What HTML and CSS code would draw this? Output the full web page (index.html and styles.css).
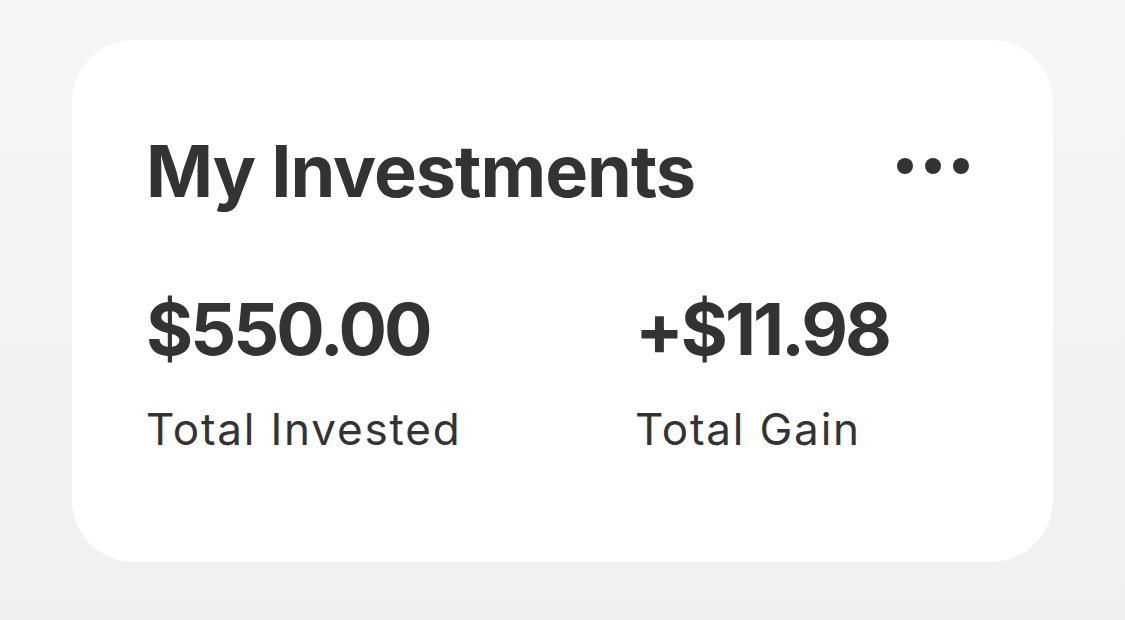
FILE: index.html
```html
<!DOCTYPE html>
<html>
<head>
<meta charset="utf-8">
<link rel="stylesheet" href="styles.css">
</head>
<body>
<main class="page">
  <section class="card">
    <header class="card-header">
      <h1 class="title">My Investments</h1>
      <button class="more" aria-label="More">
        <span class="dot"></span><span class="dot"></span><span class="dot"></span>
      </button>
    </header>
    <div class="stats">
      <div class="stat">
        <div class="amount">$550.00</div>
        <div class="label">Total Invested</div>
      </div>
      <div class="stat">
        <div class="amount">+$11.98</div>
        <div class="label">Total Gain</div>
      </div>
    </div>
  </section>
</main>
</body>
</html>
```
FILE: styles.css
```css
html, body {
  margin: 0;
  padding: 0;
}
body {
  width: 1125px;
  height: 620px;
  background: linear-gradient(#f6f6f6, #f0f0f0);
  font-family: Inter, "Liberation Sans", sans-serif;
  color: #333333;
}
.page {
  box-sizing: border-box;
  height: 620px;
  padding: 40px 72px 58px 72px;
}
.card {
  box-sizing: border-box;
  height: 522px;
  background: #ffffff;
  border-radius: 62px;
  padding: 95px 75px 0 74px;
}
.card-header {
  display: flex;
  justify-content: space-between;
  align-items: flex-start;
}
.title {
  margin: 0;
  font-size: 72px;
  line-height: 72px;
  font-weight: 700;
  letter-spacing: -1px;
}
.more {
  display: flex;
  gap: 12px;
  border: 0;
  background: none;
  padding: 0;
  margin: 23px 9px 0 0;
}
.dot {
  width: 16px;
  height: 16px;
  border-radius: 50%;
  background: #333333;
}
.stats {
  display: grid;
  grid-template-columns: 489px 1fr;
  margin-top: 86px;
}
.amount {
  font-size: 72px;
  line-height: 72px;
  font-weight: 700;
  letter-spacing: -3px;
}
.label {
  margin-top: 42px;
  font-size: 44px;
  line-height: 44px;
  font-weight: 400;
  letter-spacing: 1.8px;
}
```
